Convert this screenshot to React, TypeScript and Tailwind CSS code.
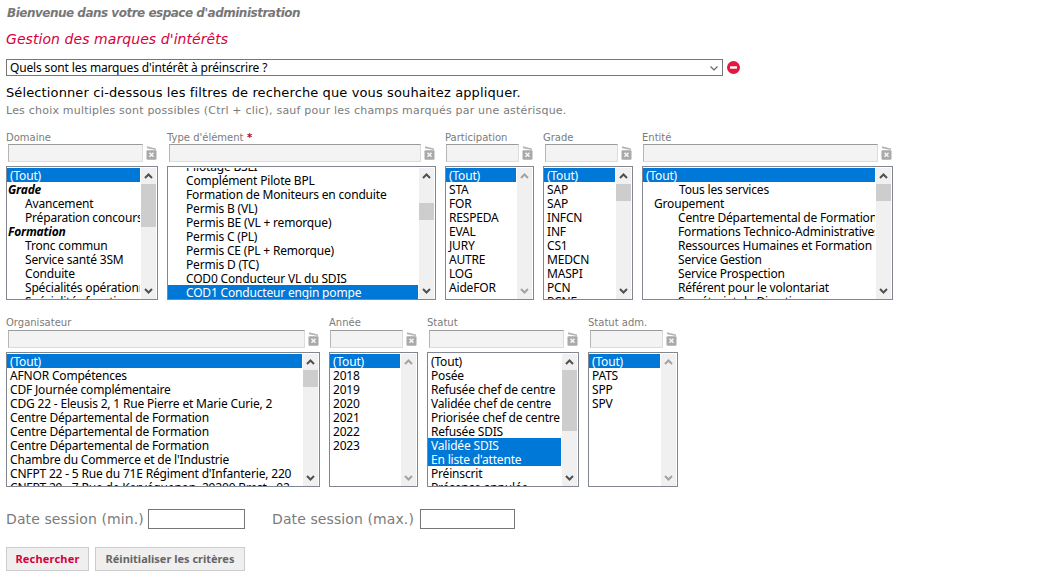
import React from "react";

type Item = { t: string; i?: number; sel?: boolean; head?: boolean };

function Chevron({ up, off }: { up?: boolean; off?: boolean }) {
  return (
    <svg width="15" height="17" viewBox="0 0 15 17" className="block shrink-0">
      <path
        d={up ? "M4 10 L7.5 6.5 L11 10" : "M4 7 L7.5 10.5 L11 7"}
        fill="none"
        stroke={off ? "#a3a3a3" : "#505050"}
        strokeWidth="2"
      />
    </svg>
  );
}

function Bin() {
  return (
    <svg width="11" height="15" viewBox="0 0.7 11 15" className="block shrink-0">
      <path d="M1 1 L10 3.2 L10 4.6 L1 3 Z" fill="#b4b4b4" />
      <rect x="0.5" y="5" width="10" height="9.5" rx="1" fill="#a9a9a9" />
      <path d="M3.5 7.5 L7.5 11.5 M7.5 7.5 L3.5 11.5" stroke="#f4f4f4" strokeWidth="1.6" />
    </svg>
  );
}

function Field({
  label,
  star,
  width,
  items,
  thumbTop,
  thumbH,
  off,
  offset = 0,
  low,
  tight,
}: {
  label: string;
  star?: boolean;
  width: string;
  items: Item[];
  thumbTop?: number;
  thumbH?: number;
  off?: boolean;
  offset?: number;
  low?: boolean;
  tight?: boolean;
}) {
  return (
    <div className={`${width} shrink-0`}>
      <div className={`${low ? "h-[14px]" : "h-[13px]"} leading-[14px] text-[10px] text-[#7b7b7b] whitespace-nowrap`}>
        {label}
        {star && <span className="text-[#c00030] font-bold"> *</span>}
      </div>
      <div className={`flex items-center h-[18px] ${tight ? "pl-[1px]" : "pl-[2px]"} pr-[1px] gap-[3px]`}>
        <div className="flex-1 h-[18px] bg-[#f3f3f3] border border-[#dcdcdc] border-t-[#9a9a9a] border-l-[#b5b5b5]" />
        <Bin />
      </div>
      <div
        className={`mt-[4px] ${low ? "h-[135px]" : "h-[134px]"} border border-[#82878f] pt-[1px] pr-[1px] flex gap-[1px] bg-white overflow-hidden`}
      >
        <div className="flex-1 min-w-0 overflow-hidden">
          <div style={{ marginTop: offset }}>
            {items.map((it, k) => (
              <div
                key={k}
                className={`h-[14px] leading-[16px] text-[12px] tracking-[-0.18px] whitespace-nowrap [font-family:'Noto_Sans','DejaVu_Sans',sans-serif] ${
                  it.sel ? "bg-[#0078d7] text-white" : "text-black"
                } ${it.head ? "font-bold italic" : ""}`}
                style={{ paddingLeft: it.i ?? 3 }}
              >
                {it.t}
              </div>
            ))}
          </div>
        </div>
        <div className="w-[15px] shrink-0 bg-[#f0f0f0] flex flex-col justify-between relative">
          <Chevron up off={off} />
          {!off && (
            <div className="absolute left-0 right-0 bg-[#cdcdcd]" style={{ top: thumbTop, height: thumbH }} />
          )}
          <Chevron off={off} />
        </div>
      </div>
    </div>
  );
}

const S = (t: string): Item => ({ t, sel: true });

export default function App() {
  return (
    <div className="w-[1062px] h-[584px] overflow-hidden bg-white pl-[6px] [font-family:'DejaVu_Sans',Verdana,sans-serif]">
      <div className="pt-[6px] pl-[1px] h-[24px] leading-[15px] text-[12px] font-bold italic text-[#777777] tracking-[-0.5px] whitespace-nowrap">
        Bienvenue dans votre espace d'administration
      </div>
      <div className="mt-[5px] h-[22px] leading-[20px] text-[14px] italic text-[#d5003c] tracking-[0.07px]">
        Gestion des marques d'intérêts
      </div>
      <div className="mt-[8px] flex items-center gap-[4px]">
        <div className="w-[717px] h-[17px] border border-[#767676] flex items-center justify-between pl-[3px] pr-[2px] text-[12px] tracking-[-0.15px] text-black [font-family:'Noto_Sans',sans-serif]">
          <span>Quels sont les marques d'intérêt à préinscrire ?</span>
          <svg width="12" height="12" viewBox="0 0 12 12">
            <path d="M2.5 4.5 L6 8 L9.5 4.5" fill="none" stroke="#666" strokeWidth="1.2" />
          </svg>
        </div>
        <svg width="13" height="13" viewBox="0 0 13 13" className="block">
          <circle cx="6.5" cy="6.5" r="6.5" fill="#e5173f" />
          <rect x="3" y="5.3" width="7" height="2.4" fill="#fff" />
        </svg>
      </div>
      <div className="mt-[9px] h-[16px] leading-[16px] text-[13px] tracking-[0.12px] text-black whitespace-nowrap">
        Sélectionner ci-dessous les filtres de recherche que vous souhaitez appliquer.
      </div>
      <div className="mt-[2px] h-[16px] leading-[16px] text-[11px] tracking-[0.21px] text-[#7b7b7b] whitespace-nowrap">
        Les choix multiples sont possibles (Ctrl + clic), sauf pour les champs marqués par une astérisque.
      </div>

      <div className="mt-[12px] flex gap-[9px]">
        <Field
          label="Domaine"
          width="w-[152px]"
          thumbTop={16}
          thumbH={43}
          items={[
            S("(Tout)"),
            { t: "Grade", head: true, i: 1 },
            { t: "Avancement", i: 18 },
            { t: "Préparation concours", i: 18 },
            { t: "Formation", head: true, i: 1 },
            { t: "Tronc commun", i: 18 },
            { t: "Service santé 3SM", i: 18 },
            { t: "Conduite", i: 18 },
            { t: "Spécialités opérationnelles", i: 18 },
            { t: "Spécialités fonctionnelles", i: 18 },
          ]}
        />
        <Field
          label="Type d'élément"
          star
          width="w-[269px]"
          thumbTop={35}
          thumbH={17}
          offset={-9}
          items={[
            { t: "Pilotage BSLI", i: 18 },
            { t: "Complément Pilote BPL", i: 18 },
            { t: "Formation de Moniteurs en conduite", i: 18 },
            { t: "Permis B (VL)", i: 18 },
            { t: "Permis BE (VL + remorque)", i: 18 },
            { t: "Permis C (PL)", i: 18 },
            { t: "Permis CE (PL + Remorque)", i: 18 },
            { t: "Permis D (TC)", i: 18 },
            { t: "COD0 Conducteur VL du SDIS", i: 18 },
            { t: "COD1 Conducteur engin pompe", i: 18, sel: true },
          ]}
        />
        <Field
          label="Participation"
          width="w-[89px]"
          off
          tight
          items={[S("(Tout)"), ...["STA", "FOR", "RESPEDA", "EVAL", "JURY", "AUTRE", "LOG", "AideFOR"].map((t) => ({ t }))]}
        />
        <Field
          label="Grade"
          width="w-[90px]"
          thumbTop={16}
          thumbH={17}
          items={[
            S("(Tout)"),
            ...["SAP", "SAP", "INFCN", "INF", "CS1", "MEDCN", "MASPI", "PCN", "PCNE"].map((t) => ({ t })),
          ]}
        />
        <Field
          label="Entité"
          width="w-[251px]"
          tight
          thumbTop={16}
          thumbH={17}
          items={[
            S("(Tout)"),
            { t: "Tous les services", i: 36 },
            { t: "Groupement", i: 11 },
            { t: "Centre Départemental de Formation", i: 35 },
            { t: "Formations Technico-Administratives", i: 35 },
            { t: "Ressources Humaines et Formation", i: 35 },
            { t: "Service Gestion", i: 35 },
            { t: "Service Prospection", i: 35 },
            { t: "Référent pour le volontariat", i: 35 },
            { t: "Secrétariat de Direction", i: 35 },
          ]}
        />
      </div>

      <div className="mt-[16px] flex gap-[9px]">
        <Field
          label="Organisateur"
          width="w-[314px]"
          low
          thumbTop={16}
          thumbH={17}
          items={[
            S("(Tout)"),
            ...[
              "AFNOR Compétences",
              "CDF Journée complémentaire",
              "CDG 22 - Eleusis 2, 1 Rue Pierre et Marie Curie, 2",
              "Centre Départemental de Formation",
              "Centre Départemental de Formation",
              "Centre Départemental de Formation",
              "Chambre du Commerce et de l'Industrie",
              "CNFPT 22 - 5 Rue du 71E Régiment d'Infanterie, 220",
              "CNFPT 29 - 7 Rue de Kervéguenon, 29200 Brest - 02",
            ].map((t) => ({ t })),
          ]}
        />
        <Field
          label="Année"
          width="w-[89px]"
          low
          tight
          off
          items={[S("(Tout)"), ...["2018", "2019", "2020", "2021", "2022", "2023"].map((t) => ({ t }))]}
        />
        <Field
          label="Statut"
          width="w-[152px]"
          low
          thumbTop={16}
          thumbH={61}
          items={[
            { t: "(Tout)" },
            { t: "Posée" },
            { t: "Refusée chef de centre" },
            { t: "Validée chef de centre" },
            { t: "Priorisée chef de centre" },
            { t: "Refusée SDIS" },
            S("Validée SDIS"),
            S("En liste d'attente"),
            { t: "Préinscrit" },
            { t: "Présence annulée" },
          ]}
        />
        <Field
          label="Statut adm."
          width="w-[90px]"
          low
          off
          items={[S("(Tout)"), { t: "PATS" }, { t: "SPP" }, { t: "SPV" }]}
        />
      </div>

      <div className="mt-[22px] flex items-center h-[20px] text-[14px] tracking-[0.1px] text-[#7b7b7b]">
        <span className="w-[142px] whitespace-nowrap">Date session (min.)</span>
        <div className="w-[97px] h-[20px] border border-[#767676] bg-white" />
        <span className="ml-[27px] w-[148px] whitespace-nowrap">Date session (max.)</span>
        <div className="w-[95px] h-[20px] border border-[#767676] bg-white" />
      </div>

      <div className="mt-[18px] flex gap-[6px] text-[11px] font-bold">
        <div className="w-[83px] h-[24px] leading-[22px] text-center border border-[#cccccc] bg-[#efefef] text-[#d5003c] tracking-[0.2px] [font-family:'Noto_Sans',sans-serif]">
          Rechercher
        </div>
        <div className="w-[150px] h-[24px] leading-[22px] text-center border border-[#cccccc] bg-[#efefef] text-[#666666] [font-family:'Noto_Sans',sans-serif]">
          Réinitialiser les critères
        </div>
      </div>
    </div>
  );
}
